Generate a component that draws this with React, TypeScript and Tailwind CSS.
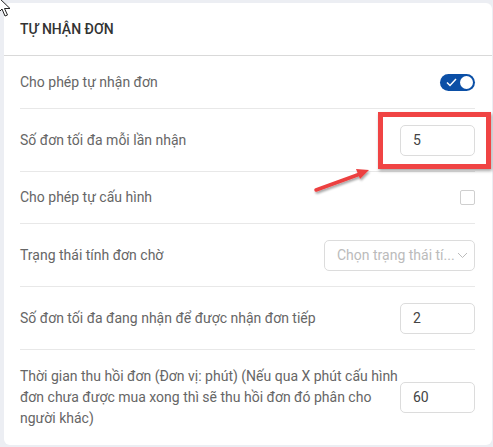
import React from "react";

function Toggle() {
	return (
		<div className="w-[35px] h-[17px] rounded-full bg-[#0b4fa6] flex items-center justify-between pl-[6px] pr-[2px]">
			<svg width="11" height="9" viewBox="0 0 11 9" fill="none">
				<path d="M1 4.5 L4 7.5 L10 1" stroke="white" strokeWidth="1.5" />
			</svg>
			<div className="w-[13px] h-[13px] rounded-full bg-white" />
		</div>
	);
}

function NumInput({ value }: { value: string }) {
	return (
		<div className="w-[75px] h-[31px] shrink-0 border border-[#dcdcdc] rounded-[5px] flex items-center pl-3 text-[#444]">
			{value}
		</div>
	);
}

function Row({
	label,
	children,
	last,
	h,
}: {
	label: React.ReactNode;
	children?: React.ReactNode;
	last?: boolean;
	h: string;
}) {
	return (
		<div
			className={
				"flex items-center justify-between " +
				h +
				(last ? "" : " border-b border-[#e8e8e8]")
			}
		>
			<div className="text-[#666] leading-[21px] whitespace-nowrap">{label}</div>
			{children}
		</div>
	);
}

const t = (s: string) => s.normalize("NFC");

export default function App() {
	return (
		<div
			className="relative w-[493px] h-[447px] overflow-hidden bg-[#eceef3] pt-[3px] pl-[4px] pr-[1px] pb-[2px] text-[14px]"
			style={{ fontFamily: "Roboto, 'Noto Sans', sans-serif" }}
		>
			<div className="bg-white rounded-md h-full">
				<div className="h-[53px] px-4 flex items-center border-b border-[#d9d9d9] font-medium text-[#333]">
					{t("TỰ NHẬN ĐƠN")}
				</div>
				<div className="pl-4 pr-[17px]">
					<Row h="h-[53px]" label={t("Cho phép tự nhận đơn")}>
						<Toggle />
					</Row>
					<Row h="h-[63px]" label={t("Số đơn tối đa mỗi lần nhận")}>
						<NumInput value="5" />
					</Row>
					<Row h="h-[52px]" label={t("Cho phép tự cấu hình")}>
						<div className="w-[15px] h-[15px] border border-[#cfcfcf] rounded-[2px]" />
					</Row>
					<Row h="h-[63px]" label={t("Trạng thái tính đơn chờ")}>
						<div className="w-[151px] h-[31px] border border-[#dcdcdc] rounded-[5px] flex items-center justify-between pl-3 pr-[6px] text-[#bbb]">
							<span>{t("Chọn trạng thái tí...")}</span>
							<svg width="11" height="7" viewBox="0 0 11 7" fill="none">
								<path d="M1 1 L5.5 5.5 L10 1" stroke="#bbb" strokeWidth="1" />
							</svg>
						</div>
					</Row>
					<Row h="h-[63px]" label={t("Số đơn tối đa đang nhận để được nhận đơn tiếp")}>
						<NumInput value="2" />
					</Row>
					<Row
						last
						h="h-[95px]"
						label={
							<>
								{t("Thời gian thu hồi đơn (Đơn vị: phút) (Nếu qua X phút cấu hình")}
								<br />
								{t("đơn chưa được mua xong thì sẽ thu hồi đơn đó phân cho")}
								<br />
								{t("người khác)")}
							</>
						}
					>
						<NumInput value="60" />
					</Row>
				</div>
			</div>

			{/* annotation */}
			<div className="absolute left-[378px] top-[112px] w-[113px] h-[57px] border-[5px] border-[#f04444] shadow-[1px_2px_3px_rgba(0,0,0,0.35)]" />
			<svg
				className="absolute left-0 top-0"
				width="493"
				height="447"
				viewBox="0 0 493 447"
			>
				<defs>
					<filter id="sh" x="-20%" y="-20%" width="140%" height="160%">
						<feDropShadow dx="1" dy="2" stdDeviation="1.2" floodColor="#000" floodOpacity="0.35" />
					</filter>
				</defs>
				<g filter="url(#sh)">
					<line x1="316" y1="190" x2="360" y2="174" stroke="#ec4040" strokeWidth="3.5" strokeLinecap="round" />
					<polygon points="369,170 356,169 360,179" fill="#ec4040" />
				</g>
				<path
					d="M-2 -3 L-2 13 L2 9 L5 16 L7.5 15 L4.5 8.5 L10 8.5 Z"
					fill="white"
					stroke="#222"
					strokeWidth="1"
				/>
			</svg>
		</div>
	);
}
